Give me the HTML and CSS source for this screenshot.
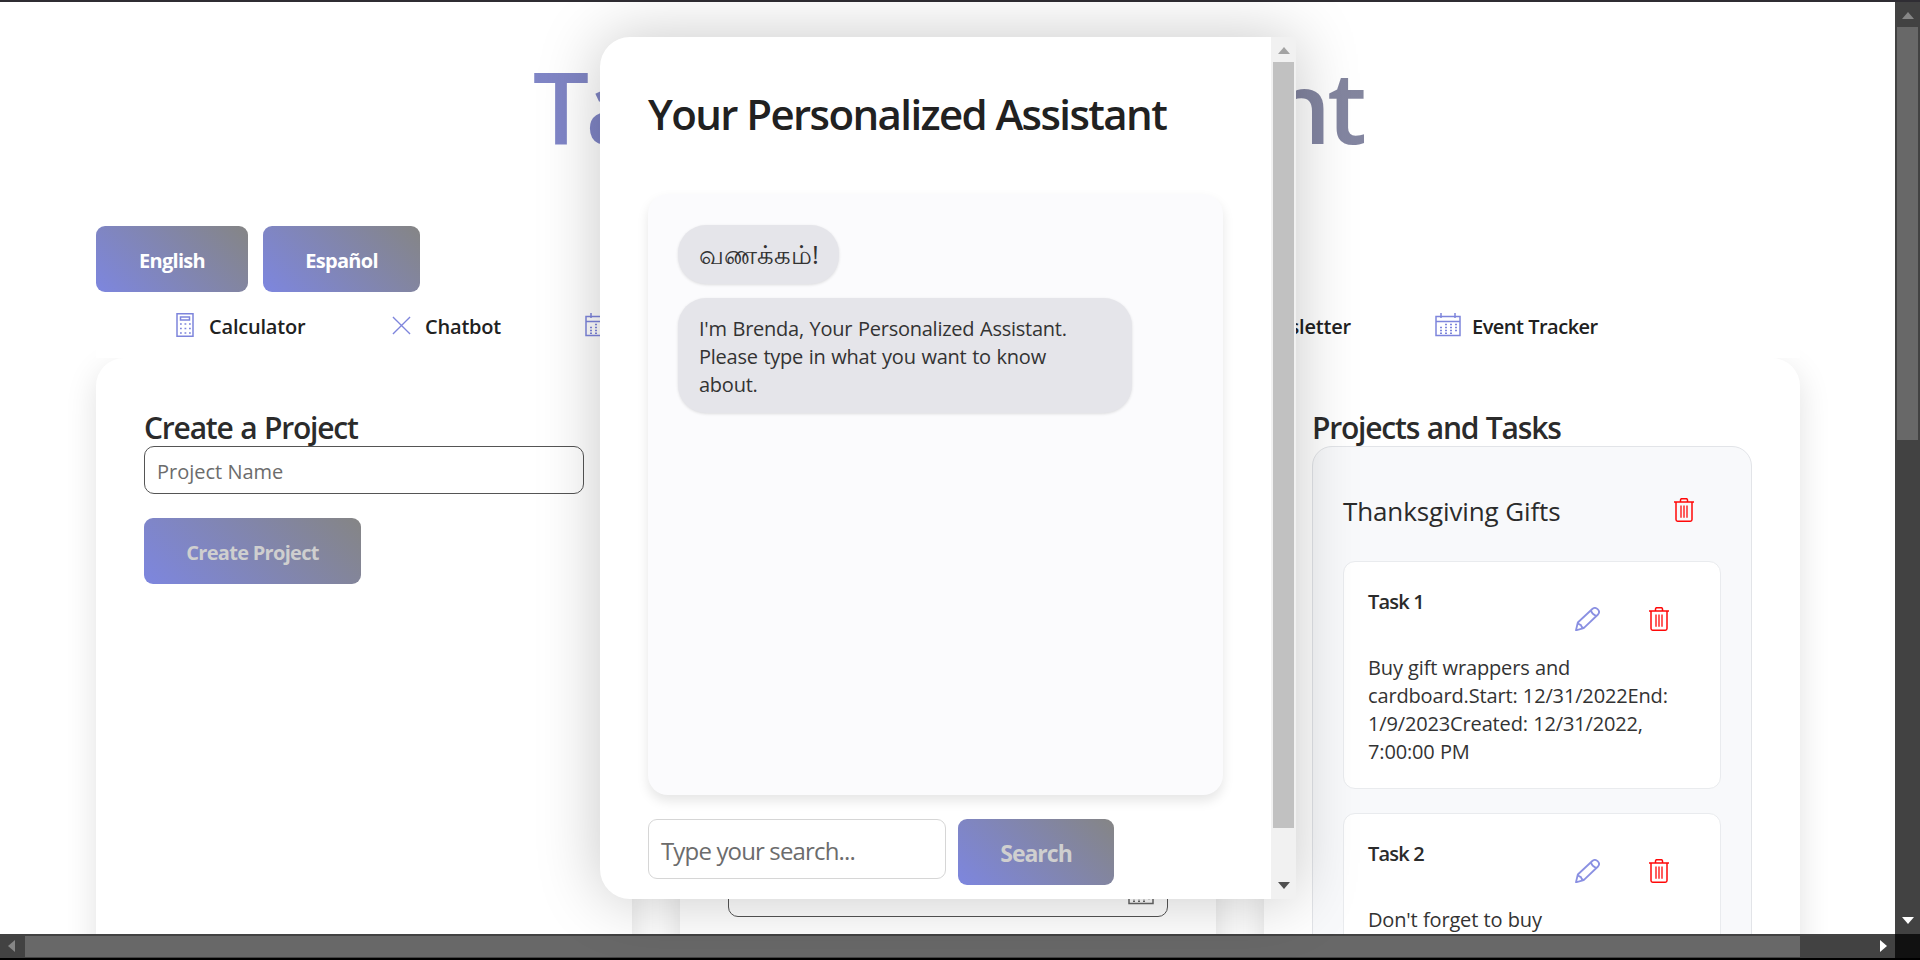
FILE: index.html
```html
<!DOCTYPE html>
<html lang="en">
<head>
<meta charset="utf-8">
<title>Task Management</title>
<link rel="stylesheet" href="styles.css">
</head>
<body>
<svg class="sprite" width="0" height="0" aria-hidden="true">
  <symbol id="calendar" viewBox="0 0 26 24"><path d="M1 3.5h24v19H1zM1 8.5h24M6 0v5M20 0v5" fill="none" stroke="currentColor" stroke-width="1.5"/><path d="M10 11.500h12M5 14.500h17M5 17.500h17M5 20.200h12" fill="none" stroke="currentColor" stroke-width="1.6" stroke-dasharray="2 3"/></symbol>
  <symbol id="calculator" viewBox="0 0 18 24"><path d="M1 .8h16v22.4H1zM4.500 4h9v3h-9z" fill="none" stroke="currentColor" stroke-width="1.5"/><path d="M4 11h11M4 15.500h11M4 20h11" fill="none" stroke="currentColor" stroke-width="1.7" stroke-dasharray="1.8 2.7"/></symbol>
  <symbol id="cross" viewBox="0 0 20 20"><path d="M1 1l18 18M19 1L1 19" fill="none" stroke="currentColor" stroke-width="1.4"/></symbol>
  <symbol id="trash" viewBox="0 0 20 24"><path d="M0 4h20M6.500 4V2q0-1.300 1.300-1.300h4.400q1.300 0 1.300 1.300v2M2 4v17.600q0 1.600 1.600 1.600h12.800q1.600 0 1.600-1.600V4" fill="none" stroke="currentColor" stroke-width="1.5"/><path d="M7 7.500v12.300M10 7.500v12.300M13 7.500v12.300" fill="none" stroke="currentColor" stroke-width="1.3"/></symbol>
  <symbol id="pencil" viewBox="0 0 25 24"><path d="M1 23.300L2.800 15.500 17.300 2q2.500-2.300 5.300.2t.4 5.300L8.700 21.200zM2.800 15.500q1 2.200 3 2.500.5 2.300 2.900 3.200M15.800 3.500q1.500 4 5.500 5.500" fill="none" stroke="currentColor" stroke-width="1.8" stroke-linejoin="round"/></symbol>
</svg>
<div class="screen">
  <div class="window">
    <main class="page">
      <header class="header">
        <h1 class="title"><span>Task Management</span></h1>
        <div class="languages">
          <button class="btn english">English</button>
          <button class="btn espanol">Español</button>
        </div>
        <nav class="nav">
          <a class="nav-item nav-calc"><svg class="ic-calc"><use href="#calculator"/></svg>Calculator</a>
          <a class="nav-item nav-chat"><svg class="ic-cross"><use href="#cross"/></svg>Chatbot</a>
          <a class="nav-item nav-cal"><svg class="ic-cal"><use href="#calendar"/></svg>Calendar</a>
          <a class="nav-item nav-news">Newsletter</a>
          <a class="nav-item nav-event"><svg class="ic-cal"><use href="#calendar"/></svg>Event Tracker</a>
        </nav>
      </header>
      <div class="columns">
        <section class="card">
          <h2 class="card-title">Create a Project</h2>
          <div class="field">Project Name</div>
          <button class="btn btn-dim create">Create Project</button>
        </section>
        <section class="card card-middle">
          <div class="field date-field"><svg class="ic-cal"><use href="#calendar"/></svg></div>
        </section>
        <section class="card">
          <h2 class="card-title projects">Projects and Tasks</h2>
          <div class="project">
            <div class="project-head"><h3 class="project-name">Thanksgiving Gifts</h3><svg class="ic-trash"><use href="#trash"/></svg></div>
            <article class="task">
              <div class="task-head"><h4 class="task-name">Task 1</h4><svg class="ic-pencil"><use href="#pencil"/></svg><svg class="ic-trash"><use href="#trash"/></svg></div>
              <p class="task-text">Buy gift wrappers and<br>cardboard.Start: 12/31/2022End:<br>1/9/2023Created: 12/31/2022,<br>7:00:00 PM</p>
            </article>
            <article class="task">
              <div class="task-head"><h4 class="task-name">Task 2</h4><svg class="ic-pencil"><use href="#pencil"/></svg><svg class="ic-trash"><use href="#trash"/></svg></div>
              <p class="task-text">Don't forget to buy</p>
            </article>
          </div>
        </section>
      </div>
    </main>
    <div class="vbar">
      <svg class="arrow-v" viewBox="0 0 12 7"><path d="M0 7L6 0l6 7z" fill="#868686"/></svg>
      <div class="vthumb"></div>
      <svg class="arrow-v down" viewBox="0 0 12 7"><path d="M0 0h12L6 7z" fill="#fff"/></svg>
    </div>
  </div>
  <div class="hbar">
    <svg class="arrow-h" viewBox="0 0 7 12"><path d="M7 0v12L0 6z" fill="#868686"/></svg>
    <div class="hthumb"></div>
    <svg class="arrow-h right" viewBox="0 0 7 12"><path d="M0 0l7 6-7 6z" fill="#fff"/></svg>
    <div class="corner"></div>
  </div>
  <div class="modal">
    <div class="modal-body">
      <h2 class="modal-title">Your Personalized Assistant</h2>
      <div class="chat">
        <div class="bubble tamil" lang="ta">வணக்கம்!</div>
        <div class="bubble">I'm Brenda, Your Personalized Assistant.<br>Please type in what you want to know<br>about.</div>
      </div>
      <div class="search-row">
        <div class="search-field">Type your search...</div>
        <button class="btn btn-dim search">Search</button>
      </div>
    </div>
    <div class="mbar">
      <svg class="arrow-v" viewBox="0 0 12 7"><path d="M0 7L6 0l6 7z" fill="#a3a3a3"/></svg>
      <div class="mthumb"></div>
      <svg class="arrow-v down" viewBox="0 0 12 7"><path d="M0 0h12L6 7z" fill="#505050"/></svg>
    </div>
  </div>
</div>
</body>
</html>
```
FILE: styles.css
```css
* { box-sizing: border-box; margin: 0; padding: 0; }
body { width: 1920px; height: 960px; overflow: hidden; background: #000; color: #2b2b2b; font: 400 20px/28px "Segoe UI", "Open Sans", "Noto Sans", sans-serif; }
svg { display: block; flex: none; }
.sprite { display: none; }
.screen { position: relative; height: 960px; display: flex; flex-direction: column; border-top: 2px solid #2f2d33; border-bottom: 2px solid #000; }
.window { display: flex; height: 932px; }
.page { width: 1895px; height: 932px; overflow: hidden; background: #fff; padding: 0 95px 0 96px; display: flex; flex-direction: column; }
.header { position: relative; z-index: 1; background: #fff; height: 356px; flex: none; }
.title { height: 224px; text-align: center; font-size: 100px; line-height: 136px; font-weight: 600; padding-top: 35px; white-space: nowrap; }
.title span { display: block; letter-spacing: -3.8px; background: linear-gradient(45deg, #7d85e0, #868686); background-clip: text; -webkit-background-clip: text; color: transparent; }
.languages { display: flex; gap: 15px; }
.btn { height: 66px; border: 0; border-radius: 9px; background: linear-gradient(45deg, #7d86df, #858585); color: #fff; font: inherit; font-weight: 700; padding-top: 3px; letter-spacing: -.7px; white-space: nowrap; }
.english { width: 152px; }
.espanol { width: 157px; }
.btn-dim { color: #cfcfcf; }
.create { width: 217px; margin-top: 24px; }
.nav { display: flex; height: 66px; padding-top: 20px; color: #212121; }
.nav-item { display: flex; height: 30px; line-height: 30px; font-weight: 600; letter-spacing: -.2px; white-space: nowrap; }
.nav svg { color: #7e85dc; }
.nav-calc { width: 216px; margin-left: 80px; }
.nav-chat { width: 193px; }
.nav-cal { width: 850px; }
.nav-news { width: 184px; justify-content: flex-end; margin: 0 84px 0 -268px; }
.nav-event { letter-spacing: -.5px; }
.ic-calc { width: 18px; height: 24px; margin: 1px 15px 0 0; }
.ic-cross { width: 19px; height: 19px; margin: 4px 14px 0 0; }
.ic-cal { width: 26px; height: 24px; margin: 1px 11px 0 0; }
.columns { display: grid; grid-template-columns: repeat(3, 536px); gap: 48px; height: 620px; }
.card { height: 620px; border-radius: 28px; background: #fff; box-shadow: 0 10px 32px rgba(0,0,0,.12); padding: 48px; }
.card-title { font-size: 30px; font-weight: 600; line-height: 43px; height: 40px; letter-spacing: -1.2px; word-spacing: 1px; white-space: nowrap; }
.field { width: 440px; height: 48px; border: 1px solid #555; border-radius: 10px; padding: 0 12px; line-height: 50px; color: #6c6c6c; }
.card-middle { display: flex; padding-top: 511px; }
.date-field { display: flex; justify-content: flex-end; padding: 10px 2px 0; color: #666; }
.project { width: 440px; height: 560px; background: #f8f9fb; border: 1px solid #e2e4e8; border-radius: 20px; padding: 0 30px; }
.project-head { display: flex; justify-content: space-between; height: 114px; padding: 51px 27px 0 0; }
.project-name { font-size: 26px; font-weight: 400; line-height: 32px; margin-top: -3px; letter-spacing: -.12px; white-space: nowrap; }
.ic-trash { width: 20px; height: 24px; color: #ff0808; }
.ic-pencil { width: 25px; height: 24px; color: #8a90e2; margin-left: auto; margin-right: 49px; }
.task { width: 378px; height: 228px; margin-bottom: 24px; background: #fff; border: 1px solid #e9ebee; border-radius: 12px; padding: 45px 24px 0; }
.task-head { display: flex; padding-right: 27px; height: 47px; }
.task-name { font-size: 20px; font-weight: 600; margin-top: -19px; letter-spacing: -.8px; }
.task-text { white-space: nowrap; letter-spacing: -.15px; word-spacing: .3px; color: #333; }
.vbar { width: 25px; height: 932px; background: #424242; padding: 10px 2px 10px; display: flex; flex-direction: column; align-items: center; }
.arrow-v { width: 12px; height: 7px; }
.down { margin-top: auto; }
.vthumb { width: 21px; height: 413px; margin-top: 8px; background: #686868; }
.hbar { height: 24px; background: #424242; display: flex; align-items: center; padding-left: 8px; }
.arrow-h { width: 7px; height: 12px; }
.hthumb { width: 1775px; height: 21px; margin-left: 10px; background: #686868; }
.right { margin-left: auto; margin-right: 8px; }
.corner { width: 25px; height: 24px; background: #111; }
.modal { position: absolute; z-index: 3; left: 600px; top: 35px; width: 696px; height: 862px; display: flex; background: #fff; border-radius: 30px 0 0 30px; box-shadow: 0 0 64px rgba(0,0,0,.22); overflow: hidden; }
.modal-body { width: 671px; padding: 48px 48px 0; }
.modal-title { font-size: 42px; line-height: 58px; font-weight: 600; letter-spacing: -1.6px; white-space: nowrap; height: 109px; color: #212121; }
.chat { width: 575px; height: 601px; padding: 31px 30px; background: #fbfbfd; border-radius: 20px; box-shadow: 0 6px 12px rgba(0,0,0,.1); display: flex; flex-direction: column; align-items: flex-start; gap: 14px; }
.bubble { height: 115px; width: 454px; border-radius: 28px; background: #e5e5ea; box-shadow: 0 1px 3px rgba(0,0,0,.12); padding: 17px 21px; white-space: nowrap; letter-spacing: -.25px; word-spacing: .8px; color: #333; }
.tamil { width: 161px; height: 59px; padding-top: 15px; font-size: 26px; letter-spacing: 0; }
.search-row { display: flex; gap: 12px; margin-top: 24px; }
.search-field { width: 298px; height: 60px; border: 1px solid #d6d6d6; border-radius: 9px; padding: 0 12px; font-size: 24px; line-height: 61px; letter-spacing: -.85px; color: #6c6c6c; white-space: nowrap; }
.search { width: 156px; font-size: 23px; letter-spacing: -1px; padding-top: 1px; }
.mbar { width: 25px; background: #f1f1f1; display: flex; flex-direction: column; align-items: center; padding: 10px 2px; }
.mthumb { width: 21px; height: 766px; margin-top: 8px; background: #c1c1c1; }
```
